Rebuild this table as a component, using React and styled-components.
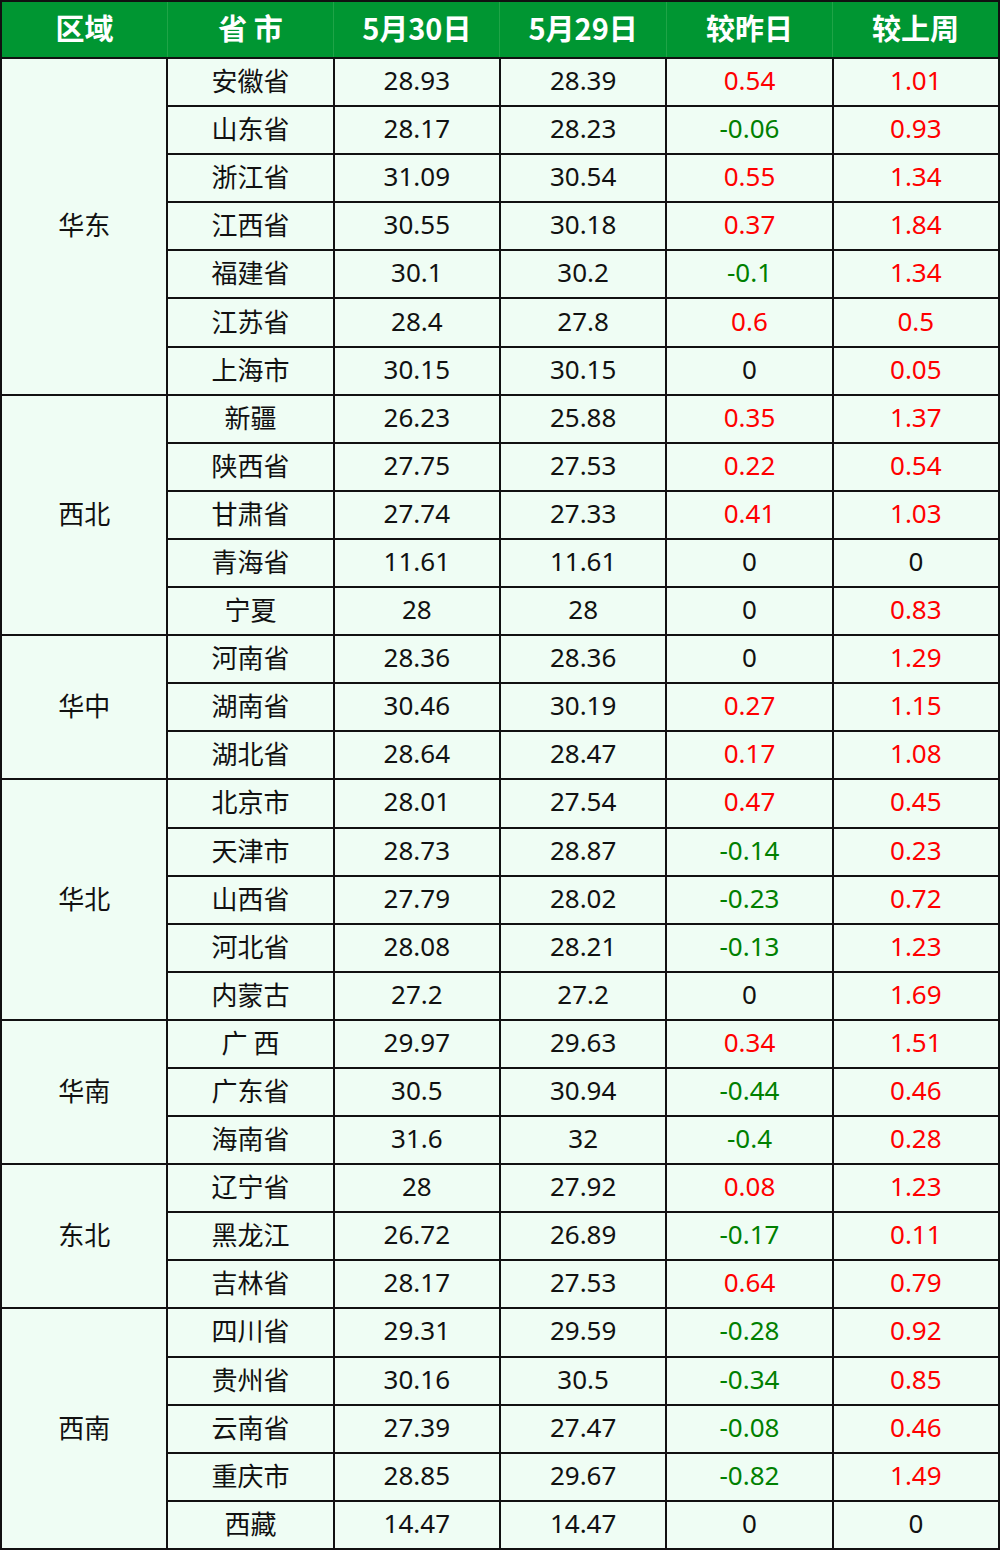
import React from "react";
import styled, { createGlobalStyle } from "styled-components";

const GlobalStyle = createGlobalStyle`
  body {
    margin: 0;
    background: #ffffff;
    font-family: "Noto Sans", "Noto Sans CJK SC", sans-serif;
  }
`;

const Table = styled.table`
  width: 1000px;
  height: 1550px;
  border-collapse: collapse;
  table-layout: fixed;
  background: #effdf4;
  border: 2px solid #111;
`;

const HeadCell = styled.th`
  height: 50px;
  background: #009632;
  color: #ffffff;
  font-family: "Noto Sans CJK SC", "Noto Sans", sans-serif;
  font-weight: 700;
  font-size: 29px;
  line-height: 1;
  text-align: center;
  padding: 0 0 5px;
  border-bottom: 2px solid #111;
  border-left: 1px solid #1fa447;
  &:first-child {
    border-left: none;
  }
`;

const Cell = styled.td`
  height: 42px;
  padding: 0 0 4px;
  line-height: 1;
  text-align: center;
  font-size: 26px;
  border: 2px solid #111;
  color: ${(p) => (p.$tone === "up" ? "#ff0000" : p.$tone === "down" ? "#008000" : "#111")};
  font-family: "Noto Sans", "Noto Sans CJK SC", sans-serif;
`;

const NameCell = styled(Cell)`
  font-family: "Noto Sans CJK SC", sans-serif;
  color: #111;
  white-space: pre;
`;

const groups = [
  ["华东", [
    ["安徽省", "28.93", "28.39", "0.54", "1.01"],
    ["山东省", "28.17", "28.23", "-0.06", "0.93"],
    ["浙江省", "31.09", "30.54", "0.55", "1.34"],
    ["江西省", "30.55", "30.18", "0.37", "1.84"],
    ["福建省", "30.1", "30.2", "-0.1", "1.34"],
    ["江苏省", "28.4", "27.8", "0.6", "0.5"],
    ["上海市", "30.15", "30.15", "0", "0.05"],
  ]],
  ["西北", [
    ["新疆", "26.23", "25.88", "0.35", "1.37"],
    ["陕西省", "27.75", "27.53", "0.22", "0.54"],
    ["甘肃省", "27.74", "27.33", "0.41", "1.03"],
    ["青海省", "11.61", "11.61", "0", "0"],
    ["宁夏", "28", "28", "0", "0.83"],
  ]],
  ["华中", [
    ["河南省", "28.36", "28.36", "0", "1.29"],
    ["湖南省", "30.46", "30.19", "0.27", "1.15"],
    ["湖北省", "28.64", "28.47", "0.17", "1.08"],
  ]],
  ["华北", [
    ["北京市", "28.01", "27.54", "0.47", "0.45"],
    ["天津市", "28.73", "28.87", "-0.14", "0.23"],
    ["山西省", "27.79", "28.02", "-0.23", "0.72"],
    ["河北省", "28.08", "28.21", "-0.13", "1.23"],
    ["内蒙古", "27.2", "27.2", "0", "1.69"],
  ]],
  ["华南", [
    ["广 西", "29.97", "29.63", "0.34", "1.51"],
    ["广东省", "30.5", "30.94", "-0.44", "0.46"],
    ["海南省", "31.6", "32", "-0.4", "0.28"],
  ]],
  ["东北", [
    ["辽宁省", "28", "27.92", "0.08", "1.23"],
    ["黑龙江", "26.72", "26.89", "-0.17", "0.11"],
    ["吉林省", "28.17", "27.53", "0.64", "0.79"],
  ]],
  ["西南", [
    ["四川省", "29.31", "29.59", "-0.28", "0.92"],
    ["贵州省", "30.16", "30.5", "-0.34", "0.85"],
    ["云南省", "27.39", "27.47", "-0.08", "0.46"],
    ["重庆市", "28.85", "29.67", "-0.82", "1.49"],
    ["西藏", "14.47", "14.47", "0", "0"],
  ]],
];

const tone = (v) => (v.startsWith("-") ? "down" : Number(v) > 0 ? "up" : "flat");

export default function App() {
  return (
    <>
      <GlobalStyle />
      <Table>
        <thead>
          <tr>
            <HeadCell>区域</HeadCell>
            <HeadCell>省 市</HeadCell>
            <HeadCell>5月30日</HeadCell>
            <HeadCell>5月29日</HeadCell>
            <HeadCell>较昨日</HeadCell>
            <HeadCell>较上周</HeadCell>
          </tr>
        </thead>
        <tbody>
          {groups.map(([region, rows]) =>
            rows.map((r, i) => (
              <tr key={region + r[0]}>
                {i === 0 && <NameCell rowSpan={rows.length}>{region}</NameCell>}
                <NameCell>{r[0]}</NameCell>
                <Cell>{r[1]}</Cell>
                <Cell>{r[2]}</Cell>
                <Cell $tone={tone(r[3])}>{r[3]}</Cell>
                <Cell $tone={tone(r[4])}>{r[4]}</Cell>
              </tr>
            ))
          )}
        </tbody>
      </Table>
    </>
  );
}
